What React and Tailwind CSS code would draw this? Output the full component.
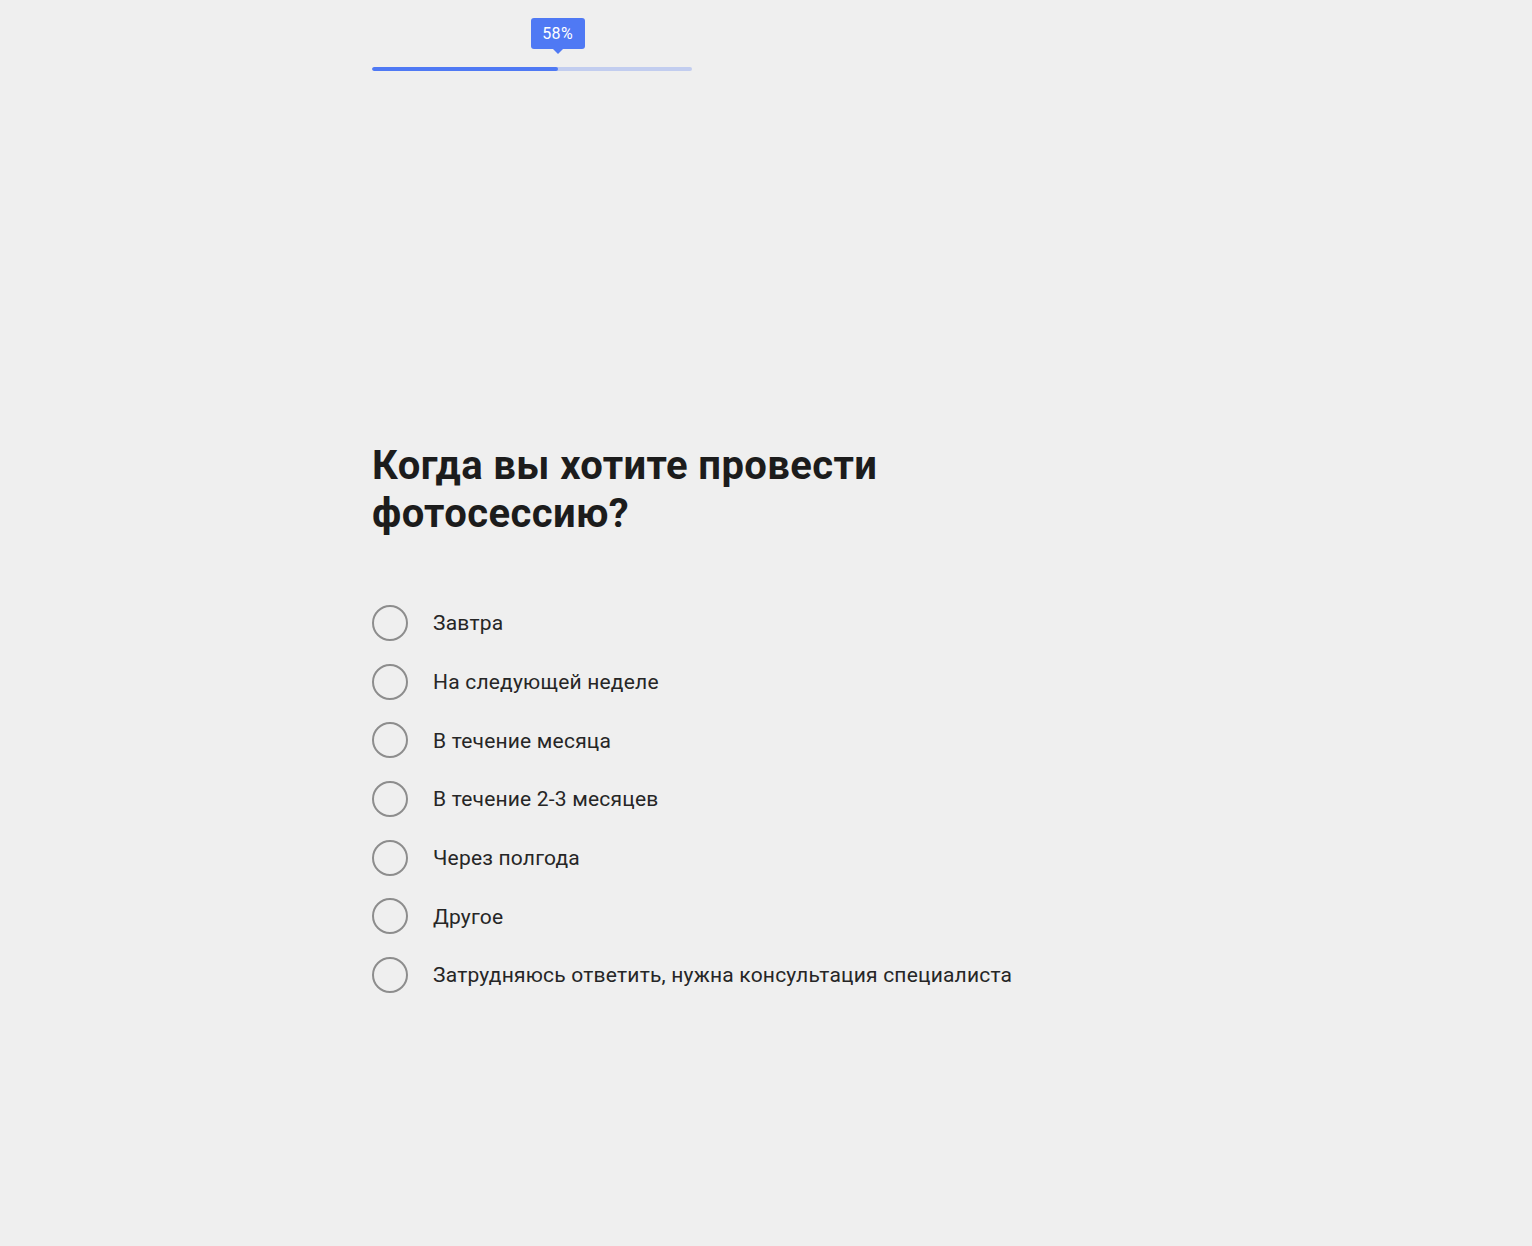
const options = [
  "Завтра",
  "На следующей неделе",
  "В течение месяца",
  "В течение 2-3 месяцев",
  "Через полгода",
  "Другое",
  "Затрудняюсь ответить, нужна консультация специалиста",
];

export default function App() {
  const percent = 58;
  return (
    <div
      className="min-h-[1246px] bg-[#efefef]"
      style={{ fontFamily: "Roboto, 'Noto Sans', sans-serif" }}
    >
      <div className="mx-auto w-[788px] pt-[18px]">
        {/* progress */}
        <div className="relative w-[320px] pt-[49px]">
          <div
            className="absolute top-0 -translate-x-1/2 flex flex-col items-center"
            style={{ left: `${(percent / 100) * 320}px` }}
          >
            <div className="h-[31px] w-[54px] rounded-[3px] bg-[#4f79f4] flex items-center justify-center pt-[1px] text-[16px] tracking-[0.3px] text-white">
              {percent}%
            </div>
            <div className="h-0 w-0 border-x-[5px] border-t-[5px] border-x-transparent border-t-[#4f79f4]" />
          </div>
          <div className="h-[4px] w-full rounded-full bg-[#c2cdef] overflow-hidden">
            <div className="h-full rounded-full bg-[#4f79f4]" style={{ width: `${percent}%` }} />
          </div>
        </div>

        {/* question */}
        <h1 className="mt-[371px] w-[640px] text-[40px] leading-[48px] tracking-[0.4px] font-bold text-[#1c1c1c]">
          Когда вы хотите провести фотосессию?
        </h1>

        <div className="mt-[67px] flex flex-col gap-[22.7px]">
          {options.map((o) => (
            <label key={o} className="flex items-center gap-[25px] cursor-pointer">
              <span className="h-[36px] w-[36px] shrink-0 rounded-full border-2 border-[#8d8d8d]" />
              <span className="pt-[2px] text-[21px] tracking-[0.2px] text-[#262626]">{o}</span>
            </label>
          ))}
        </div>
      </div>
    </div>
  );
}
